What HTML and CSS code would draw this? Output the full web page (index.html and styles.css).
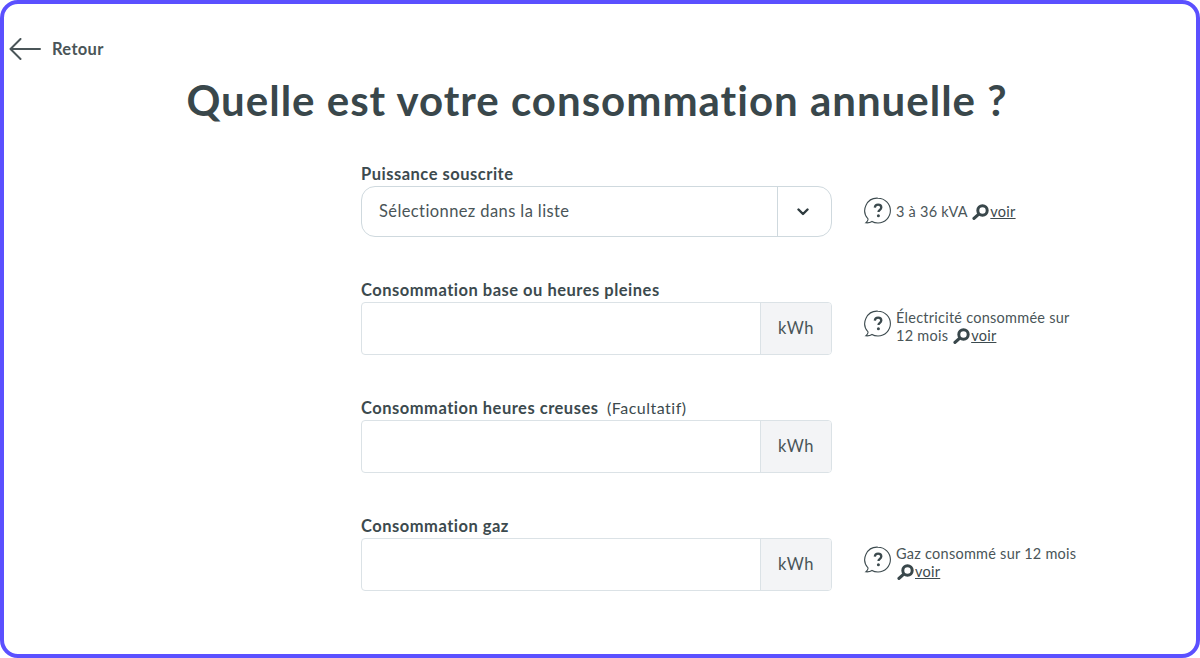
FILE: index.html
```html
<!DOCTYPE html>
<html lang="fr">
<head>
<meta charset="utf-8">
<title>Consommation annuelle</title>
<link rel="stylesheet" href="styles.css">
</head>
<body>
<svg class="defs" width="0" height="0" aria-hidden="true">
  <symbol id="bubble" viewBox="0 0 28 27">
    <path d="M14 1.200a12.400 12.400 0 0 1 0 24.800c-2.400 0-4.400-.5-6-1.500-1.500 1-3.500 1.500-6 1.300 1.300-1 2-2.200 2.100-3.800A12.400 12.400 0 0 1 14 1.200z" fill="none" stroke="currentColor" stroke-width="1.100"/>
    <path d="M10.800 10.600c.2-2 1.500-3 3.300-3 1.900 0 3.200 1.100 3.200 2.800 0 1.400-.8 2-1.700 2.700-.8.6-1.100 1-1.100 2" fill="none" stroke="currentColor" stroke-width="2.300"/>
    <circle cx="14.400" cy="18.800" r="1.500" fill="currentColor"/>
  </symbol>
  <symbol id="loupe" viewBox="0 0 17 16">
    <circle cx="10.500" cy="6.500" r="4.700" fill="none" stroke="currentColor" stroke-width="3"/>
    <path d="M6.500 10.400 2 14.400" fill="none" stroke="currentColor" stroke-width="3.200" stroke-linecap="round"/>
  </symbol>
</svg>
<main class="frame">
  <a class="back" href="#">
    <svg class="back-icon" viewBox="0 0 32 22" aria-hidden="true"><path d="M31 11H2M11.500 1 1.500 11l10 10" fill="none" stroke="currentColor" stroke-width="2" stroke-linecap="round" stroke-linejoin="round"/></svg>
    <span>Retour</span>
  </a>
  <h1 class="title">Quelle est votre consommation annuelle ?</h1>
  <form class="form">
    <div class="row">
      <div class="field">
        <label class="label">Puissance souscrite</label>
        <div class="select">
          <span class="select-value">Sélectionnez dans la liste</span>
          <span class="select-arrow"><svg class="chevron" viewBox="0 0 12 8" aria-hidden="true"><path d="M1.500 1.500 6 6l4.500-4.500" fill="none" stroke="currentColor" stroke-width="2.400" stroke-linecap="round" stroke-linejoin="round"/></svg></span>
        </div>
      </div>
      <div class="hint">
        <svg class="bubble"><use href="#bubble"/></svg>
        <p class="hint-text">3 à 36 kVA <svg class="loupe"><use href="#loupe"/></svg><a href="#">voir</a></p>
      </div>
    </div>
    <div class="row">
      <div class="field">
        <label class="label">Consommation base ou heures pleines</label>
        <div class="input"><span class="input-box"></span><span class="unit">kWh</span></div>
      </div>
      <div class="hint hint-two">
        <svg class="bubble"><use href="#bubble"/></svg>
        <p class="hint-text">Électricité consommée sur<br>12 mois <svg class="loupe"><use href="#loupe"/></svg><a href="#">voir</a></p>
      </div>
    </div>
    <div class="row">
      <div class="field">
        <label class="label">Consommation heures creuses <span class="optional">(Facultatif)</span></label>
        <div class="input"><span class="input-box"></span><span class="unit">kWh</span></div>
      </div>
    </div>
    <div class="row">
      <div class="field">
        <label class="label">Consommation gaz</label>
        <div class="input"><span class="input-box"></span><span class="unit">kWh</span></div>
      </div>
      <div class="hint hint-two">
        <svg class="bubble"><use href="#bubble"/></svg>
        <p class="hint-text">Gaz consommé sur 12 mois<br><svg class="loupe"><use href="#loupe"/></svg><a href="#">voir</a></p>
      </div>
    </div>
  </form>
</main>
</body>
</html>
```
FILE: styles.css
```css
* { box-sizing: border-box; }
html, body { margin: 0; height: 100%; }
body {
  background: #fff;
  color: #3c4a4e;
  font-family: "Lato", "Open Sans", sans-serif;
  overflow: hidden;
}
.defs { position: absolute; }
.frame {
  height: 658px;
  border: 4px solid #5b50ff;
  border-radius: 18px;
  padding: 33px 0 0 5px;
}
.back {
  display: flex;
  align-items: center;
  gap: 11px;
  height: 24px;
  color: #4a5558;
  text-decoration: none;
  font-size: 16.500px;
  letter-spacing: .3px;
  font-weight: 700;
}
.back-icon { width: 32px; height: 22px; }
.title {
  margin: 10px 0 0;
  padding-right: 11px;
  text-align: center;
  font-size: 42px;
  line-height: 58px;
  font-weight: 700;
  letter-spacing: 1px;
  color: #39474b;
}
.form {
  margin: 33px 0 0 352px;
  display: flex;
  flex-direction: column;
}
.row {
  display: grid;
  grid-template-columns: 471px 1fr;
  column-gap: 32px;
  align-items: end;
  margin-bottom: 41px;
}
.label {
  display: block;
  height: 24px;
  font-size: 16.500px;
  line-height: 24px;
  letter-spacing: .5px;
  font-weight: 700;
  color: #3c4a4e;
}
.optional { font-weight: 400; font-size: 16px; margin-left: 4px; }
.select {
  display: flex;
  height: 51px;
  border: 1px solid #cfd9de;
  border-radius: 14px;
}
.select-value {
  flex: 1;
  padding-left: 17px;
  line-height: 49px;
  font-size: 16.500px;
  color: #4a5558;
  letter-spacing: .4px;
}
.select-arrow {
  display: flex;
  align-items: center;
  justify-content: center;
  width: 54px;
  padding-right: 4px;
  border-left: 1px solid #cfd9de;
  color: #2f3b3f;
}
.chevron { width: 12px; height: 8px; }
.input {
  display: flex;
  height: 53px;
  border: 1px solid #dbe2e6;
  border-radius: 4px;
  overflow: hidden;
}
.input-box { flex: 1; }
.unit {
  width: 71px;
  background: #f3f4f6;
  border-left: 1px solid #dbe2e6;
  text-align: center;
  line-height: 51px;
  font-size: 16.500px;
  color: #4a5558;
  letter-spacing: .5px;
}
.hint {
  display: flex;
  align-items: center;
  gap: 4px;
  height: 51px;
  color: #3c4a4e;
}
.bubble { flex: none; width: 28px; height: 27px; margin-bottom: 2px; }
.hint-two .bubble { margin-bottom: 13px; }
.hint-two .hint-text { margin-bottom: 5px; }
.hint-text {
  margin: 0;
  font-size: 14.500px;
  line-height: 18px;
  letter-spacing: .25px;
  color: #4a5558;
}
.hint-text a { color: #3c4a4e; text-decoration: underline; margin-left: 1px; }
.loupe { width: 17px; height: 16px; vertical-align: -3px; color: #39474b; margin-left: 1px; }
```
